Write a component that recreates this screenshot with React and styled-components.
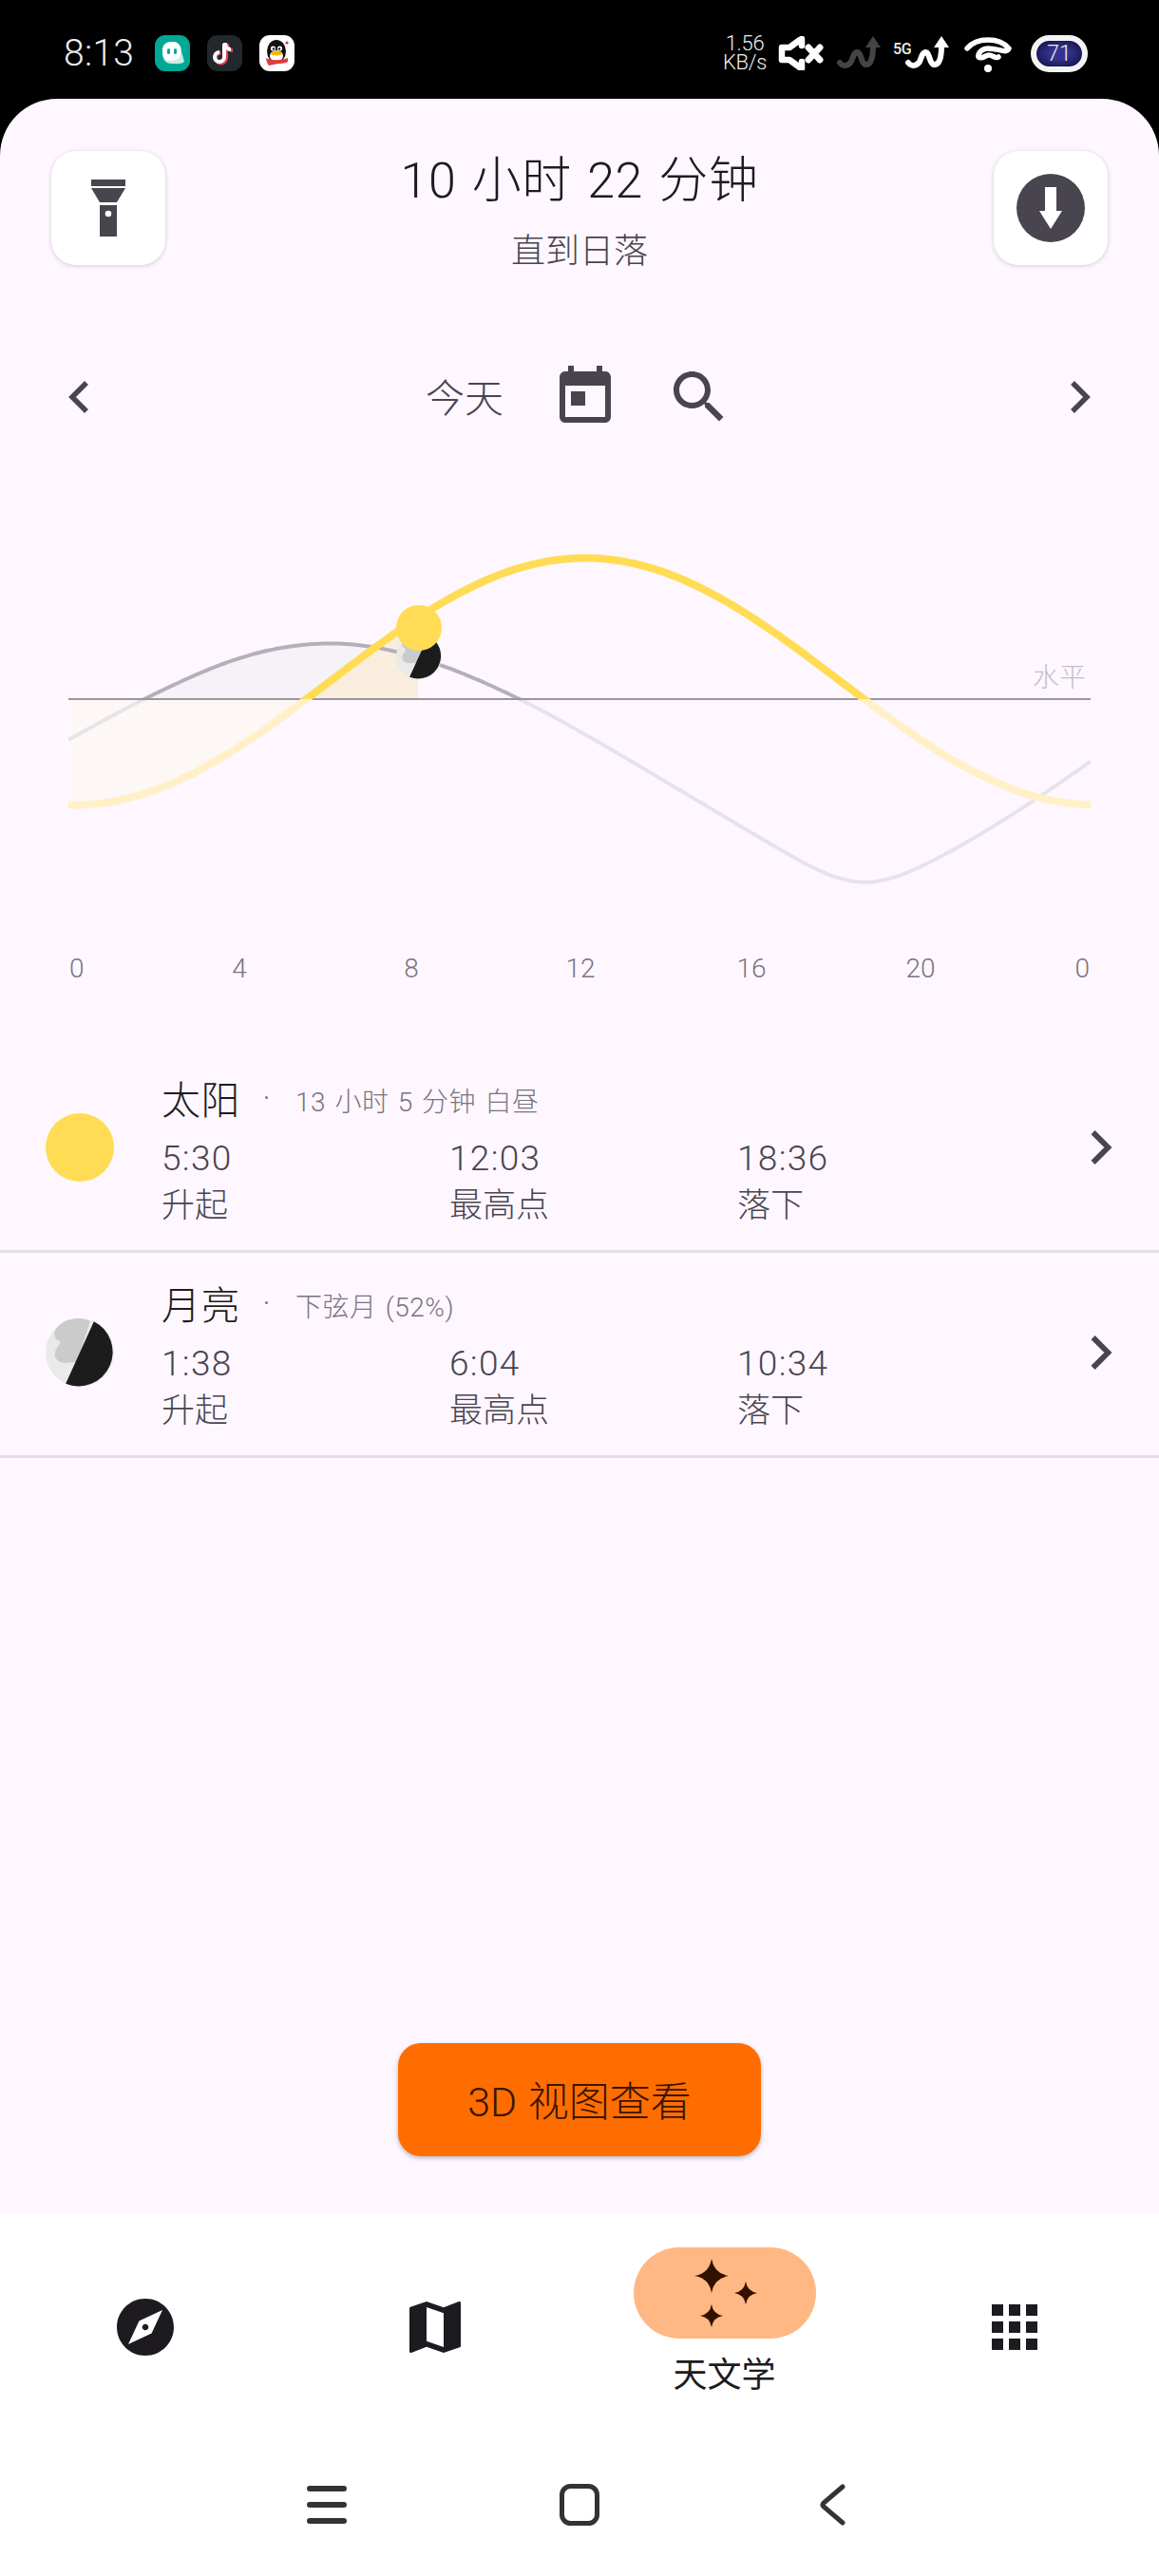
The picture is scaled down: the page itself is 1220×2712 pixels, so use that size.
import React from "react";
import styled, { createGlobalStyle } from "styled-components";

const FONT = `Roboto, "Noto Sans CJK SC", sans-serif`;

const Global = createGlobalStyle`
  html, body { margin: 0; padding: 0; background: #000; }
  * { box-sizing: border-box; }
`;

const Page = styled.div`
  width: 1220px; height: 2712px; background: #000; display: flex; flex-direction: column;
  font-family: ${FONT}; font-weight: 300; overflow: hidden;
`;
const StatusBar = styled.header`
  height: 104px; flex: none; display: flex; align-items: center; padding: 8px 75px 0 67px; color: #eee;
`;
const Clock = styled.span`font-size: 39px; width: 96px; letter-spacing: .3px;`;
const AppIcons = styled.div`display: flex; gap: 18px;`;
const StatusIcons = styled.div`margin-left: auto; display: flex; align-items: center;`;
const Speed = styled.div`
  font-size: 22px; line-height: 20px; text-align: center; width: 46px; margin-right: 12px; letter-spacing: -.3px;
`;
const IconGap = styled.span`width: ${p => p.$w}px; flex: none;`;
const FiveG = styled.span`
  font-size: 16px; font-weight: 500; align-self: flex-start; margin: 6px -7px 0 12px; width: 20px; color: #eee; letter-spacing: -.4px;
`;
const Battery = styled.div`
  width: 60px; height: 39px; margin-left: 20px; border: 6px solid #f4f4f4; border-radius: 20px;
  background: radial-gradient(ellipse at center, #33338f 30%, #0b0b3a 100%);
  color: #eee; font-size: 23px; display: flex; align-items: center; justify-content: center;
`;
const Card = styled.main`
  flex: 1; min-height: 0; background: #fef7ff; border-radius: 60px 60px 0 0; display: flex; flex-direction: column;
`;
const Header = styled.div`
  height: 120px; margin-top: 55px; padding: 0 54px; display: flex; align-items: flex-start; flex: none;
`;
const SquareButton = styled.div`
  width: 120px; height: 120px; flex: none; background: #fff; border-radius: 26px;
  box-shadow: 0 1px 5px rgba(0,0,0,.18); display: flex; align-items: center; justify-content: center;
`;
const TitleBlock = styled.div`flex: 1; text-align: center;`;
const Title = styled.div`font-size: 52px; line-height: 64px; color: #1d1b20; letter-spacing: .6px; word-spacing: 3px;`;
const Subtitle = styled.div`font-size: 36px; line-height: 54px; margin-top: 15px; color: #49454f;`;
const DateNav = styled.div`
  margin-top: 103px; height: 72px; flex: none; padding: 0 72px; display: flex; align-items: center; justify-content: space-between;
`;
const DateCenter = styled.div`display: flex; align-items: center; gap: 48px;`;
const Today = styled.span`font-size: 41px; color: #49454f; margin-right: 2px; padding-bottom: 4px;`;
const Chart = styled.svg`display: block; margin-top: 86px; flex: none; width: 1220px; height: 500px;`;
const AxisText = styled.text`font-family: ${FONT}; font-weight: 300; font-size: 28px; fill: #79747e;`;
const HorizonText = styled.text`font-family: ${FONT}; font-weight: 300; font-size: 28px; fill: #c4c0c8;`;
const Rows = styled.section`margin-top: 63px; flex: none;`;
const BodyRow = styled.div`
  height: 216px; border-bottom: 3px solid #e3dfe5; padding: 0 48px 3px 48px; display: flex; align-items: center;
`;
const BodyInfo = styled.div`margin-left: 50px; flex: 1; align-self: flex-start; padding-top: 24px;`;
const BodyHead = styled.div`display: flex; align-items: center; height: 56px;`;
const BodyName = styled.span`font-size: 41px; color: #1d1b20; letter-spacing: .5px;`;
const Dot = styled.span`width: 3px; height: 3px; border-radius: 50%; background: #79747e; margin: 0 29px 0 26px;`;
const BodyNote = styled.span`font-size: 28px; color: #79747e; word-spacing: 2px; letter-spacing: .5px; padding-top: 5px;`;
const Times = styled.div`display: grid; grid-template-columns: repeat(3, 303px); margin-top: 12px;`;
const TimeValue = styled.div`font-size: 37px; line-height: 50px; color: #49454f; letter-spacing: 1.3px;`;
const TimeLabel = styled.div`font-size: 35px; line-height: 50px; color: #49454f;`;
const Spacer = styled.div`flex: 1;`;
const ViewButton = styled.div`
  align-self: center; flex: none; width: 382px; height: 119px; margin-bottom: 60px; padding-bottom: 4px; background: #ff6d00; border-radius: 24px;
  box-shadow: 0 2px 5px rgba(0,0,0,.28); color: #3a1500; font-size: 43px; display: flex; align-items: center; justify-content: center; word-spacing: 1px;
`;
const BottomArea = styled.div`flex: none; height: 382px; background: #fff; display: flex; flex-direction: column;`;
const NavBar = styled.nav`display: grid; grid-template-columns: repeat(4, 305px); height: 250px; padding-top: 36px;`;
const NavItem = styled.div`display: flex; flex-direction: column; align-items: center;`;
const NavPill = styled.div`
  width: 192px; height: 96px; border-radius: 48px; display: flex; align-items: center; justify-content: center;
  background: ${p => (p.$active ? "#ffb883" : "transparent")}; margin-top: ${p => (p.$active ? 0 : "36px")};
`;
const NavLabel = styled.span`font-size: 36px; line-height: 50px; margin-top: 14px; color: #1d1b20; font-weight: 400;`;
const SystemNav = styled.div`flex: 1; display: flex; align-items: flex-start; justify-content: center; padding-top: 35px; gap: 224px;`;
const SystemSlot = styled.div`width: 42px; display: flex; justify-content: center;`;

/* curves */
const X0 = 72, X1 = 1148, HY = 736, NOW = 441;
const sunY = x => 717.5 - 130 * Math.cos((2 * Math.PI * (x - 616)) / 1076);
const sunPts = [];
for (let x = X0; x <= X1; x += 4) sunPts.push([x, sunY(x)]);

const moonSamples = [
  [-60, 850], [0, 817], [72, 779], [146, 738], [232, 698], [290, 681], [349, 675], [404, 681], [473, 702], [549, 736],
  [620, 775], [689, 816], [758, 857], [827, 898], [870, 923], [906, 936], [942, 927], [999, 898], [1068, 857], [1148, 802], [1210, 758], [1280, 708],
];
const interp = x => {
  for (let i = 0; i < moonSamples.length - 1; i++) {
    const [a, ay] = moonSamples[i], [b, by] = moonSamples[i + 1];
    if (x >= a && x <= b) return ay + ((by - ay) * (x - a)) / (b - a);
  }
  return 800;
};
const moonY = x => {
  let sum = 0, w = 0;
  for (let d = -90; d <= 90; d += 3) {
    const g = Math.exp(-(d * d) / (2 * 28 * 28));
    sum += g * interp(x + d);
    w += g;
  }
  return sum / w;
};
const moonPts = [];
for (let x = X0; x <= X1; x += 4) moonPts.push([x, moonY(x)]);

const line = pts => pts.map((p, i) => `${i ? "L" : "M"}${p[0].toFixed(1)} ${p[1].toFixed(1)}`).join("");
const area = (pts, a, b) => {
  const s = pts.filter(p => p[0] >= a && p[0] <= b);
  return `${line(s)}L${s[s.length - 1][0].toFixed(1)} ${HY}L${s[0][0].toFixed(1)} ${HY}Z`;
};

const Icon = ({ size = 72, d, fill = "#49454f", vb = "0 0 24 24" }) => (
  <svg width={size} height={size} viewBox={vb} aria-hidden="true"><path d={d} fill={fill} /></svg>
);
const Chevron = ({ dir, w = 22, h = 36 }) => (
  <svg width={w} height={h} viewBox="0 0 22 36" aria-hidden="true">
    <path d={dir === "left" ? "M19 3 L4 18 L19 33" : "M3 3 L18 18 L3 33"} fill="none" stroke="#49454f" strokeWidth="5.5" />
  </svg>
);

const MoonArt = () => (
  <>
    <circle cx="36" cy="36" r="36" fill="#e9eae9" />
    <path d="M10 13 C14 6 20 2 27 1 C34 -1 42 0 47 3 L33 46 L20 47 C13 46 9 42 10 37 C10 31 16 28 15 24 C10 23 8 18 10 13Z" fill="#cbcbcb" />
    <path d="M50.85 3.24 A36 36 0 0 1 21.15 68.76 Z" fill="#1c1c1c" />
  </>
);
const MoonDisc = ({ size }) => <svg width={size} height={size} viewBox="0 0 72 72" aria-hidden="true"><MoonArt /></svg>;
const SunDisc = () => <svg width="72" height="72" viewBox="0 0 72 72" aria-hidden="true"><circle cx="36" cy="36" r="36" fill="#ffdc54" /></svg>;

const star = (cx, cy, r) => {
  const q = r * 0.14;
  return `M${cx} ${cy - r}Q${cx + q} ${cy - q} ${cx + r} ${cy}Q${cx + q} ${cy + q} ${cx} ${cy + r}Q${cx - q} ${cy + q} ${cx - r} ${cy}Q${cx - q} ${cy - q} ${cx} ${cy - r}Z`;
};

const BODIES = [
  { name: "太阳", note: "13 小时 5 分钟 白昼", icon: <SunDisc />, times: ["5:30", "12:03", "18:36"] },
  { name: "月亮", note: "下弦月 (52%)", icon: <MoonDisc size={72} />, times: ["1:38", "6:04", "10:34"] },
];
const LABELS = ["升起", "最高点", "落下"];
const AXIS = [[73, "start", "0"], [252, "middle", "4"], [433, "middle", "8"], [611, "middle", "12"], [791, "middle", "16"], [969, "middle", "20"], [1147, "end", "0"]];

const Squiggle = ({ color }) => (
  <svg width="47" height="36" viewBox="0 0 47 36" aria-hidden="true">
    <path d="M3 28 C7 33 12 31 15 27 C17 23 17 18 21 17 C26 17 25 29 30 30 C36 31 38 22 38 10" fill="none" stroke={color} strokeWidth="6" strokeLinecap="round" />
    <path d="M38 0 L46 12 H30 Z" fill={color} />
  </svg>
);

export default function App() {
  return (
    <Page>
      <Global />
      <StatusBar>
        <Clock>8:13</Clock>
        <AppIcons>
          <svg width="37" height="38" viewBox="0 0 37 38" aria-hidden="true">
            <rect width="37" height="38" rx="11" fill="#00a896" />
            <path d="M8 17 C8 9 13 7 18 7 C24 7 28 10 28 17 L31 28 C28 31 22 30 18 30 C11 30 8 26 8 17Z" fill="#c9ece6" />
            <path d="M8 17 C8 9 13 7 18 7 C24 7 27 10 27 17 C27 25 23 27 17 27 C11 27 8 24 8 17Z" fill="#fff" />
            <rect x="13" y="14" width="3" height="6" rx="1.5" fill="#00a896" /><rect x="20" y="14" width="3" height="6" rx="1.5" fill="#00a896" />
          </svg>
          <svg width="37" height="38" viewBox="0 0 37 38" aria-hidden="true">
            <rect width="37" height="38" rx="11" fill="#22282c" />
            <path d="M21 9 C21 14 24 16 27 16 M20 10 V24 A5.5 5.5 0 1 1 14.5 18.5" fill="none" stroke="#e8415a" strokeWidth="4" />
            <path d="M19 8 C19 13 22 15 25 15 M18 9 V23 A5 5 0 1 1 13 18" fill="none" stroke="#fff" strokeWidth="4" />
          </svg>
          <svg width="37" height="38" viewBox="0 0 37 38" aria-hidden="true">
            <rect width="37" height="38" rx="11" fill="#fff" />
            <ellipse cx="18" cy="17" rx="10" ry="12" fill="#111" />
            <ellipse cx="18" cy="22" rx="7" ry="6" fill="#fff" />
            <circle cx="14.5" cy="14" r="2.6" fill="#fff" /><circle cx="21.5" cy="14" r="2.6" fill="#fff" />
            <circle cx="15" cy="14.4" r="1.2" fill="#111" /><circle cx="21" cy="14.4" r="1.2" fill="#111" />
            <ellipse cx="18" cy="19" rx="6" ry="2.4" fill="#f5b800" />
            <path d="M7 24 C13 27 23 27 30 24 L30 28 C26 30 22 30 20 30 L10 32 L8 29 Z" fill="#e23b3b" />
            <circle cx="29" cy="8" r="1.6" fill="#e23b3b" />
          </svg>
        </AppIcons>
        <StatusIcons>
          <Speed>1.56<br />KB/s</Speed>
          <svg width="48" height="36" viewBox="0 0 48 36" aria-hidden="true">
            <path d="M23 4 L12 12 H4 V25 H12 L23 33 M25 3 V10 M25 27 V34" fill="none" stroke="#fff" strokeWidth="6.5" strokeLinejoin="round" strokeLinecap="round" />
            <path d="M32 12 L44 25 M44 12 L32 25" fill="none" stroke="#fff" strokeWidth="7" strokeLinecap="round" />
          </svg>
          <IconGap $w={14} />
          <Squiggle color="#444" />
          <FiveG>5G</FiveG>
          <Squiggle color="#fff" />
          <IconGap $w={15} />
          <svg width="50" height="40" viewBox="0 0 50 40" aria-hidden="true">
            <path d="M3 15 C13 3 37 3 47 15 C44 21 37 15 25 15 C20 15 14 19 15 24 C19 27 22 22 26 22 C30 22 33 26 36 24" fill="none" stroke="#fff" strokeWidth="5.5" strokeLinecap="round" strokeLinejoin="round" />
            <circle cx="25" cy="36" r="4" fill="#fff" />
          </svg>
          <Battery>71</Battery>
        </StatusIcons>
      </StatusBar>
      <Card>
        <Header>
          <SquareButton>
            <svg width="36" height="60" viewBox="0 0 36 60" aria-hidden="true">
              <rect x="0" y="0" width="36" height="7" fill="#49454f" />
              <path d="M0 9 H36 L27 24 H9 Z" fill="#49454f" />
              <rect x="9" y="27" width="18" height="33" fill="#49454f" />
              <circle cx="18" cy="36" r="3.3" fill="#fff" />
            </svg>
          </SquareButton>
          <TitleBlock>
            <Title>10 小时 22 分钟</Title>
            <Subtitle>直到日落</Subtitle>
          </TitleBlock>
          <SquareButton>
            <svg width="72" height="72" viewBox="0 0 72 72" aria-hidden="true">
              <circle cx="36" cy="36" r="36" fill="#49454f" />
              <path d="M30 14 H42 V39 H48 L36 58 L24 39 H30 Z" fill="#fff" />
            </svg>
          </SquareButton>
        </Header>
        <DateNav>
          <Chevron dir="left" />
          <DateCenter>
            <Today>今天</Today>
            <Icon d="M19 3h-1V1h-2v2H8V1H6v2H5c-1.11 0-1.99.9-1.99 2L3 19c0 1.1.89 2 2 2h14c1.1 0 2-.9 2-2V5c0-1.1-.9-2-2-2zm0 16H5V8h14v11zM7 10h5v5H7z" />
            <Icon d="M15.5 14h-.79l-.28-.27C15.41 12.59 16 11.11 16 9.5 16 5.91 13.09 3 9.5 3S3 5.91 3 9.5 5.91 16 9.5 16c1.61 0 3.09-.59 4.23-1.57l.27.28v.79l5 4.99L20.49 19l-4.99-5zm-6 0C7.01 14 5 11.99 5 9.5S7.01 5 9.5 5 14 7.01 14 9.5 11.99 14 9.5 14z" />
          </DateCenter>
          <Chevron dir="right" />
        </DateNav>
        <Chart viewBox="0 540 1220 500">
          <defs>
            <clipPath id="above"><rect x="0" y="540" width="1220" height={HY - 540} /></clipPath>
            <clipPath id="below"><rect x="0" y={HY} width="1220" height="400" /></clipPath>
          </defs>
          <path d={area(moonPts, 146, NOW)} fill="#f5f2f8" />
          <path d={area(sunPts, 323, NOW)} fill="#f9eedd" />
          <path d={area(sunPts, X0, 323)} fill="#fdf8f6" />
          <path d={line(moonPts)} fill="none" stroke="#b4afb9" strokeWidth="4" clipPath="url(#above)" />
          <path d={line(moonPts)} fill="none" stroke="#e7e3ea" strokeWidth="4" clipPath="url(#below)" />
          <rect x={X0} y={HY - 1} width={X1 - X0} height="2" fill="#9a969e" />
          <svg x={NOW - 24} y="667" width="48" height="48" viewBox="0 0 72 72"><MoonArt /></svg>
          <path d={line(sunPts)} fill="none" stroke="#ffdc54" strokeWidth="8" clipPath="url(#above)" />
          <path d={line(sunPts)} fill="none" stroke="#fff0c8" strokeWidth="8" clipPath="url(#below)" />
          <circle cx={NOW} cy="661" r="24" fill="#ffdc54" />
          <HorizonText x="1143" y="723" textAnchor="end">水平</HorizonText>
          {AXIS.map(([x, anchor, t], i) => (
            <AxisText key={i} x={x} y="1029" textAnchor={anchor}>{t}</AxisText>
          ))}
        </Chart>
        <Rows>
          {BODIES.map(b => (
            <BodyRow key={b.name}>
              {b.icon}
              <BodyInfo>
                <BodyHead>
                  <BodyName>{b.name}</BodyName>
                  <Dot />
                  <BodyNote>{b.note}</BodyNote>
                </BodyHead>
                <Times>
                  {b.times.map((t, i) => (
                    <div key={t}>
                      <TimeValue>{t}</TimeValue>
                      <TimeLabel>{LABELS[i]}</TimeLabel>
                    </div>
                  ))}
                </Times>
              </BodyInfo>
              <Chevron dir="right" w={26} h={38} />
            </BodyRow>
          ))}
        </Rows>
        <Spacer />
        <ViewButton>3D 视图查看</ViewButton>
      </Card>
      <BottomArea>
        <NavBar>
          <NavItem>
            <NavPill><Icon fill="#1d1b20" d="M12 10.9c-.61 0-1.1.49-1.1 1.1s.49 1.1 1.1 1.1c.61 0 1.1-.49 1.1-1.1s-.49-1.1-1.1-1.1zM12 2C6.48 2 2 6.48 2 12s4.48 10 10 10 10-4.48 10-10S17.52 2 12 2zm2.19 12.19L6 18l3.81-8.19L18 6l-3.81 8.19z" /></NavPill>
          </NavItem>
          <NavItem>
            <NavPill><Icon fill="#1d1b20" d="M20.5 3l-.16.03L15 5.1 9 3 3.36 4.9c-.21.07-.36.25-.36.48V20.5c0 .28.22.5.5.5l.16-.03L9 18.9l6 2.1 5.64-1.9c.21-.07.36-.25.36-.48V3.5c0-.28-.22-.5-.5-.5zM15 19l-6-2.11V5l6 2.11V19z" /></NavPill>
          </NavItem>
          <NavItem>
            <NavPill $active>
              <svg width="72" height="72" viewBox="0 0 72 72" aria-hidden="true">
                <path d={`${star(22, 18, 18)}${star(58, 36, 12)}${star(22, 60, 12)}`} fill="#331100" />
              </svg>
            </NavPill>
            <NavLabel>天文学</NavLabel>
          </NavItem>
          <NavItem>
            <NavPill><Icon fill="#1d1b20" d="M4 8h4V4H4v4zm6 12h4v-4h-4v4zm-6 0h4v-4H4v4zm0-6h4v-4H4v4zm0 0zm6 0h4v-4h-4v4zm6-10v4h4V4h-4zm-6 4h4V4h-4v4zm6 6h4v-4h-4v4zm0 6h4v-4h-4v4z" /></NavPill>
          </NavItem>
        </NavBar>
        <SystemNav>
          <SystemSlot>
            <svg width="42" height="44" viewBox="0 0 42 44" aria-hidden="true">
              <path d="M3 5 H39 M3 22 H39 M3 39 H39" stroke="#333" strokeWidth="6" strokeLinecap="round" />
            </svg>
          </SystemSlot>
          <SystemSlot>
            <svg width="42" height="44" viewBox="0 0 42 44" aria-hidden="true">
              <rect x="2.5" y="2.5" width="37" height="39" rx="9" fill="none" stroke="#333" strokeWidth="5" />
            </svg>
          </SystemSlot>
          <SystemSlot>
            <svg width="28" height="44" viewBox="0 0 28 44" aria-hidden="true">
              <path d="M25 3 L5 20 Q3 22 5 24 L25 41" fill="none" stroke="#333" strokeWidth="5" strokeLinecap="round" />
            </svg>
          </SystemSlot>
        </SystemNav>
      </BottomArea>
    </Page>
  );
}
